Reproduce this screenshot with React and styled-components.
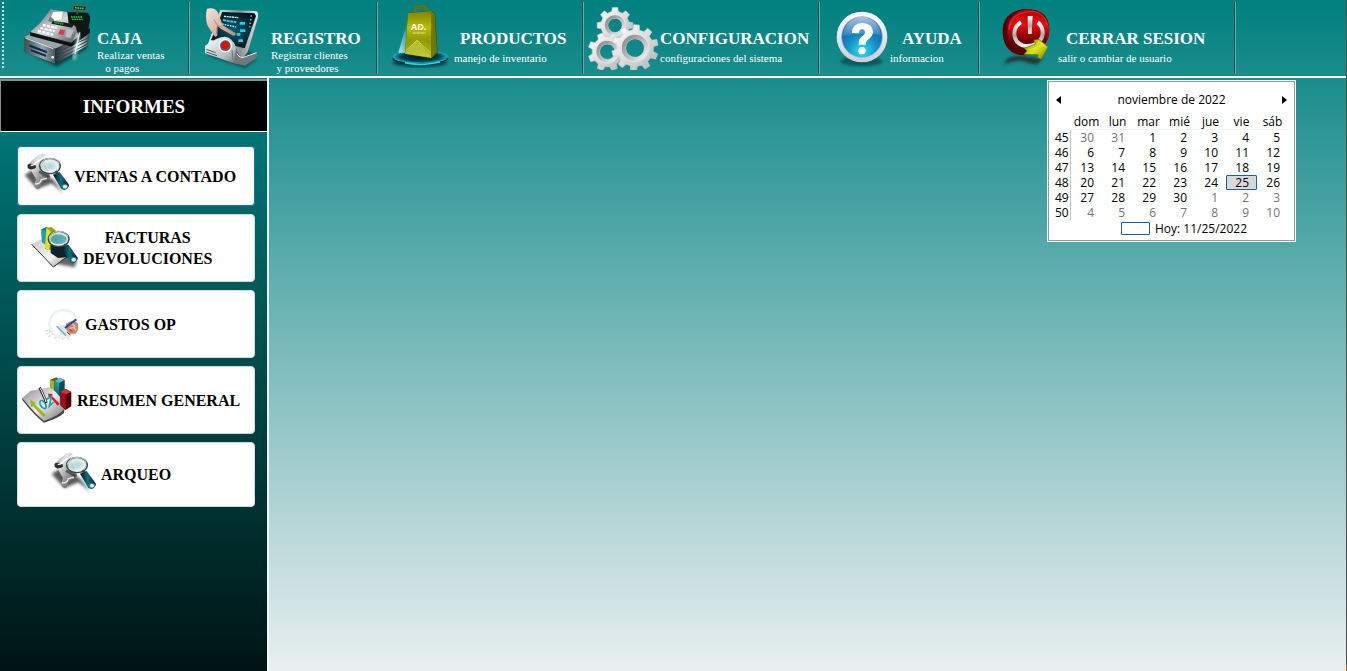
import React from "react";
import styled, { createGlobalStyle } from "styled-components";

const GlobalStyle = createGlobalStyle`
  *, *::before, *::after { box-sizing: border-box; }
  html, body { margin: 0; }
  body { font-family: "Liberation Serif", "Times New Roman", serif; }
  button { font: inherit; color: inherit; margin: 0; padding: 0; cursor: pointer; }
`;

const Page = styled.div`
  min-height: 100vh;
  display: flex;
  flex-direction: column;
  background: linear-gradient(#008080, #e9eff0);
  border-right: 1px solid;
  border-image: linear-gradient(#4b5052 calc(100% - 7px), #b05f28 0) 1;
`;

const Toolbar = styled.header`
  display: flex;
  height: 78px;
  padding: 2px 0;
  border-bottom: 2px solid #fff;
`;

const Grip = styled.div`
  flex: none;
  width: 5px;
  height: 68px;
  border-right: 1px solid transparent;
  background: repeating-linear-gradient(#c9e6e5 0 2px, transparent 2px 4px) 2px 0 / 2px 100% no-repeat;
`;

const ToolButton = styled.button`
  flex: none;
  display: flex;
  align-items: flex-start;
  gap: ${(p) => p.$gap}px;
  width: ${(p) => p.$width}px;
  height: 72px;
  padding-left: ${(p) => p.$start}px;
  border: 0;
  background:
    linear-gradient(#0b4f50, #0b4f50) right 1px top 0 / 1px 100% no-repeat,
    linear-gradient(#5fb0af, #5fb0af) right 0 top 0 / 1px 100% no-repeat;
  color: #fff;
  text-align: left;
  svg { flex: none; display: block; }
`;

const ToolText = styled.span`
  display: flex;
  flex-direction: column;
  padding-top: 27px;
  white-space: pre;
`;

const ToolTitle = styled.span`
  padding-left: ${(p) => p.$indent || 0}px;
  font-size: 17px;
  line-height: 20px;
  font-weight: bold;
`;

const ToolNote = styled.span`
  font-size: 11px;
  line-height: ${(p) => (p.$lines > 1 ? 13 : 18)}px;
`;

const Body = styled.div`
  flex: 1;
  display: flex;
`;

const Sidebar = styled.nav`
  flex: none;
  width: 269px;
  padding-top: 1px;
  border-right: 2px solid #eef6f6;
  background: linear-gradient(#007f7f, #001414);
`;

const SidebarTitle = styled.h1`
  margin: 0;
  height: 53px;
  border: solid;
  border-width: 2px 0 1px 1px;
  border-color: #8c8c8c #fff #fff #8c8c8c;
  background: #000;
  color: #fff;
  font-size: 19px;
  line-height: 52px;
  text-align: center;
`;

const ReportList = styled.div`
  display: flex;
  flex-direction: column;
  gap: 8px;
  padding: 14px 12px 14px 17px;
`;

const ReportButton = styled.button`
  display: flex;
  align-items: center;
  gap: 5px;
  height: ${(p) => p.$height}px;
  padding-left: ${(p) => p.$start}px;
  border: 1px solid ${(p) => (p.$focused ? "#1573c0" : "#d3dcdc")};
  border-radius: 4px;
  background: #fff;
  color: #000;
  font-size: 16px;
  line-height: 21px;
  font-weight: bold;
  white-space: pre;
  svg { flex: none; display: block; }
`;

const Workspace = styled.main`
  flex: 1;
  display: flex;
  justify-content: flex-end;
  align-items: flex-start;
  padding: 2px 50px 0 0;
`;

const Calendar = styled.section`
  width: 249px;
  padding: 4px 3px;
  border: 1px solid #fff;
  outline: 1px solid #8f9d9d;
  outline-offset: -2px;
  background: #fff;
  color: #000;
  font-family: "Open Sans", "Noto Sans", sans-serif;
  font-size: 12px;
`;

const CalendarHead = styled.div`
  display: flex;
  align-items: center;
  justify-content: space-between;
  height: 29px;
  padding: 0 5px;
`;

const ArrowButton = styled.button`
  display: flex;
  border: 0;
  background: none;
`;

const Month = styled.table`
  border-collapse: separate;
  border-spacing: 0;
  table-layout: fixed;
  width: 237px;
  th, td { padding: 0; font-weight: normal; }
  thead th { height: 16px; line-height: 15px; border-bottom: 1px solid #f2f2f2; }
  thead th:first-child { width: 20px; border-bottom: 0; }
`;

const Week = styled.th`
  height: 15px;
  line-height: 15px;
  text-align: left;
  padding-left: 4px !important;
  background: linear-gradient(#c8c8c8, #c8c8c8) right 0 top 0 / 1px 100% no-repeat;
`;

const Day = styled.td`
  height: 15px;
  line-height: ${(p) => (p.$today ? 13 : 15)}px;
  text-align: right;
  padding-right: ${(p) => (p.$today ? 7 : 8)}px !important;
  color: ${(p) => (p.$other ? "#757575" : "#000")};
  ${(p) => p.$today && "background:#d9d9d9;border:1px solid #1661ab;border-radius:1px;"}
`;

const TodayButton = styled.button`
  display: flex;
  align-items: center;
  gap: 5px;
  margin-left: 70px;
  height: 17px;
  border: 0;
  background: none;
`;

const TodayBox = styled.span`
  width: 29px;
  height: 13px;
  border: 1px solid #1661ab;
  border-radius: 1px;
`;

/* ---------- Icons ---------- */

function RegisterIcon() {
  return (
    <svg width="68" height="68" viewBox="66 6 204 204" aria-hidden="true">
      <defs>
        <linearGradient id="cf" x1="0" y1="0" x2="1" y2="0"><stop offset="0" stopColor="#3d4a50" /><stop offset=".6" stopColor="#98a6ad" /><stop offset="1" stopColor="#49565c" /></linearGradient>
        <linearGradient id="cs" x1="0" y1="0" x2="1" y2="0"><stop offset="0" stopColor="#20292e" /><stop offset=".5" stopColor="#72838a" /><stop offset=".7" stopColor="#e9f5f7" /><stop offset="1" stopColor="#34444b" /></linearGradient>
        <linearGradient id="ct" x1="0" y1="0" x2="1" y2="1"><stop offset="0" stopColor="#4b5358" /><stop offset=".5" stopColor="#d5dadc" /><stop offset="1" stopColor="#474f54" /></linearGradient>
        <filter id="cb" x="-30%" y="-60%" width="160%" height="220%"><feGaussianBlur stdDeviation="5" /></filter>
      </defs>
      <path d="M70 150L170 200L266 142L240 125Z" fill="#063c40" opacity=".9" filter="url(#cb)" />
      <path d="M72 110L104 98L266 98L166 146Z" fill="#98a4aa" />
      <path d="M72 111L166 146V191L74 156Z" fill="url(#cf)" />
      <path d="M166 146L268 102L264 136L166 191Z" fill="url(#cs)" />
      <path d="M168 158L266 113M168 169L265 122M168 180L265 131" stroke="#37474f" strokeWidth="3" />
      <path d="M76 114L160 146" stroke="#dfe6e9" strokeWidth="3" />
      <path d="M88 133L140 153V160L88 140Z" fill="#0b2c4a" />
      <path d="M92 147L138 164V171L92 154Z" fill="#0f2c49" />
      <circle cx="158" cy="172" r="4" fill="#f3f7f8" />
      <path d="M90 94L215 127L270 84V98L214 140L90 107Z" fill="#101416" />
      <path d="M152 28L204 37L214 72L238 84L214 128L90 96L120 70Z" fill="url(#ct)" />
      <path d="M202 36L262 38Q272 44 270 62L264 92L238 114L226 78L206 70Z" fill="#111617" />
      <path d="M209 44L250 44L254 64L211 60Z" fill="#06270c" />
      <path d="M213 51H248M216 58H248" stroke="#27c536" strokeWidth="4" strokeDasharray="5 2" />
      <path d="M218 14L262 17L258 35L216 31Z" fill="#586668" />
      <path d="M222 18L258 20L255 31L220 28Z" fill="#08270d" />
      <path d="M225 23L252 26" stroke="#38d945" strokeWidth="5" strokeDasharray="5 2" />
      <path d="M232 33V43" stroke="#39464a" strokeWidth="7" />
      <path d="M160 36L188 35L185 58L163 62L153 52Z" fill="#fafafa" />
      <path d="M151 49L144 64L156 67L163 61Z" fill="#767b80" />
      <path d="M158 63L190 67L222 73L216 83L154 71Z" fill="#162018" />
      <path d="M163 67L190 72" stroke="#35bd3e" strokeWidth="5" strokeDasharray="4 2" />
      <g stroke="#fff" strokeWidth="7" strokeDasharray="9 4"><path d="M128 75L170 84" /><path d="M121 84L164 94" /><path d="M114 93L160 104" /></g>
      <g stroke="#87939a" strokeWidth="1"><path d="M123 80L170 90M117 89L164 99M185 83L220 90" /></g>
      <path d="M181 88L196 91L190 106L174 102Z" fill="#e53a3a" />
      <path d="M200 86L222 90L211 114L196 111Z" fill="#b5bdc0" />
      <path d="M237 100L222 178" stroke="#e7fbff" strokeWidth="7" opacity=".9" filter="url(#cb)" />
      <path d="M239 97L225 160" stroke="#f5ffff" strokeWidth="4" opacity=".8" />
    </svg>
  );
}

function TouchIcon() {
  return (
    <svg width="54" height="68" viewBox="57 6 162 204" aria-hidden="true">
      <defs>
        <linearGradient id="rs" x1="0" y1="0" x2="1" y2="0"><stop offset="0" stopColor="#f5f5f5" /><stop offset=".65" stopColor="#8c9294" /><stop offset="1" stopColor="#e5e8e8" /></linearGradient>
        <radialGradient id="rp" cx=".5" cy=".5" r=".6"><stop offset="0" stopColor="#055c73" /><stop offset="1" stopColor="#020d12" /></radialGradient>
        <linearGradient id="rb" x1="0" y1="0" x2="1" y2="1"><stop offset="0" stopColor="#fff" /><stop offset=".6" stopColor="#b9bec0" /><stop offset="1" stopColor="#4e5355" /></linearGradient>
        <linearGradient id="rh" x1="0" y1="0" x2="1" y2="1"><stop offset="0" stopColor="#fae6da" /><stop offset="1" stopColor="#b98a76" /></linearGradient>
        <filter id="rf"><feGaussianBlur stdDeviation="4" /></filter>
      </defs>
      <path d="M64 166L180 204L216 176L190 150Z" fill="#033f42" opacity=".7" filter="url(#rf)" />
      <path d="M106 29L214 33Q223 40 219 52L188 156L168 181L66 140Z" fill="url(#rs)" />
      <path d="M112 36L208 40L213 48L179 145L78 120Z" fill="url(#rp)" />
      <g stroke="#22cfe4" strokeWidth="4" fill="none"><path d="M117 49L160 53" stroke="#e9ffff" strokeDasharray="6 2" /><path d="M114 60L154 67" strokeWidth="6" strokeDasharray="9 2" /><path d="M111 72L153 81" stroke="#b2f4fa" strokeDasharray="5 3" /><path d="M164 70H180M165 92H181M155 103H166M160 122H174" strokeWidth="8" /><path d="M199 46L194 82" stroke="#9bd7df" strokeDasharray="4 7" /></g>
      <path d="M60 137L92 118Q136 94 153 142L169 182L174 195L147 190L60 160Z" fill="url(#rb)" />
      <path d="M153 142Q164 178 180 171L216 160L215 174L179 197L147 188Z" fill="#73787a" />
      <path d="M156 161Q165 178 181 170L215 158" fill="none" stroke="#f7f7f7" strokeWidth="3" />
      <path d="M64 148L92 158M64 156L96 167" stroke="#51595b" strokeWidth="3" />
      <path d="M141 150L144 180M151 160L154 182" stroke="#73797b" strokeWidth="3" />
      <circle cx="121" cy="137" r="20" fill="#f8f8f8" /><circle cx="121" cy="137" r="16" fill="#565d60" />
      <path d="M109 129L122 123L132 129L130 144L120 150L110 143Z" fill="#e10b18" />
      <path d="M66 26Q91 20 100 40L113 76L151 99Q154 107 145 107L107 86L97 77L97 105Q93 115 86 106L68 77Q59 52 66 26Z" fill="url(#rh)" />
      <path d="M87 59L98 77L112 82M98 77L94 102" fill="none" stroke="#a26c56" strokeWidth="2" />
    </svg>
  );
}

function BagIcon() {
  return (
    <svg width="58" height="68" viewBox="33 6 174 204" aria-hidden="true">
      <defs>
        <linearGradient id="bg" x1="0" y1="0" x2="0" y2="1"><stop offset="0" stopColor="#7e8200" /><stop offset=".35" stopColor="#b9bc05" /><stop offset=".65" stopColor="#8f9600" /><stop offset="1" stopColor="#b9c31a" /></linearGradient>
        <radialGradient id="bd"><stop offset="0" stopColor="#00141c" /><stop offset=".7" stopColor="#00404f" /><stop offset="1" stopColor="#12b5cc" /></radialGradient>
        <linearGradient id="bl" x1="1" y1="0" x2="0" y2="1"><stop offset="0" stopColor="#fff" stopOpacity="0" /><stop offset="1" stopColor="#d9ffff" /></linearGradient>
        <filter id="bf"><feGaussianBlur stdDeviation="4" /></filter>
      </defs>
      <ellipse cx="120" cy="188" rx="83" ry="13" fill="#052f35" opacity=".8" filter="url(#bf)" />
      <path d="M38 168V180Q50 194 120 194T204 178V168Z" fill="#012a35" />
      <ellipse cx="121" cy="170" rx="83" ry="20" fill="url(#bd)" />
      <path d="M75 188Q95 193 120 193T180 186" stroke="#25dbe8" strokeWidth="5" fill="none" />
      <path d="M55 158L82 65L77 159Z" fill="url(#bl)" opacity=".8" />
      <path d="M105 38L107 23Q109 17 132 18Q138 19 139 37" fill="none" stroke="#6d7100" strokeWidth="8" />
      <path d="M84 38L155 32L165 40L173 157L153 176L75 162Z" fill="#3d4500" />
      <path d="M84 39L155 33L154 173L75 161Z" fill="url(#bg)" />
      <path d="M154 34L164 41L171 157L154 174Z" fill="#6f7900" />
      <path d="M75 161L112 118L154 173Z" fill="#c3ca46" opacity=".65" /><path d="M78 152L111 121L153 160" stroke="#dfe575" strokeWidth="2" fill="none" />
      <text x="93" y="89" fill="#fff" fontFamily="Open Sans, sans-serif" fontWeight="bold" fontSize="27">AD.</text>
      <path d="M98 99H136" stroke="#d7dc79" strokeWidth="4" strokeDasharray="3 1" />
      <path d="M92 124H139M98 131H142M89 138H130" stroke="#d3d66a" strokeWidth="1" strokeDasharray="4 2" />
    </svg>
  );
}

function gearPath(cx, cy, r, teeth, turn) {
  const pts = [];
  for (let i = 0; i < teeth; i++) {
    [[-0.3, 0.79], [-0.19, 1], [0.19, 1], [0.3, 0.79]].forEach(([o, k]) => {
      const a = ((i + o + turn) / teeth) * Math.PI * 2 - Math.PI / 2;
      pts.push(`${(cx + Math.cos(a) * r * k).toFixed(1)} ${(cy + Math.sin(a) * r * k).toFixed(1)}`);
    });
  }
  const h = r * 0.4;
  return `M${pts.join("L")}ZM${cx - h} ${cy}a${h} ${h} 0 1 0 ${2 * h} 0a${h} ${h} 0 1 0 ${-2 * h} 0Z`;
}

function GearsIcon() {
  const gears = [[105, 76, 54, 8, 0], [82, 155, 58, 8, 0.5], [165, 144, 70, 10, 0.1]];
  return (
    <svg width="71" height="68" viewBox="24 6 213 204" aria-hidden="true">
      <defs>
        <linearGradient id="gg" x1="0" y1="0" x2="1" y2="1"><stop offset="0" stopColor="#fff" /><stop offset=".5" stopColor="#dcdcdc" /><stop offset="1" stopColor="#b2b2b2" /></linearGradient>
        <linearGradient id="gi" x1="0" y1="0" x2="1" y2="1"><stop offset="0" stopColor="#8a8a8a" /><stop offset=".5" stopColor="#b8b8b8" /><stop offset="1" stopColor="#f4f4f4" /></linearGradient>
      </defs>
      {gears.map(([x, y, r, n, turn]) => (
        <g key={x}>
          <path d={gearPath(x, y, r, n, turn)} fill="url(#gg)" fillRule="evenodd" stroke="#c6cccc" strokeWidth="2" strokeLinejoin="round" />
          <circle cx={x} cy={y} r={r * 0.49} fill="none" stroke="url(#gi)" strokeWidth={r * 0.18} />
          <circle cx={x} cy={y} r={r * 0.6} fill="none" stroke="#ececec" strokeWidth="2" />
        </g>
      ))}
    </svg>
  );
}

function HelpIcon() {
  return (
    <svg width="54" height="68" viewBox="60 6 162 204" aria-hidden="true">
      <defs>
        <radialGradient id="hb" cx=".5" cy=".85" r=".85"><stop offset="0" stopColor="#28e3f5" /><stop offset=".45" stopColor="#138dc5" /><stop offset="1" stopColor="#1551a0" /></radialGradient>
        <linearGradient id="hr" x1="0" y1="0" x2="0" y2="1"><stop offset="0" stopColor="#fff" /><stop offset="1" stopColor="#c9d0d6" /></linearGradient>
        <linearGradient id="hg" x1="0" y1="0" x2="0" y2="1"><stop offset="0" stopColor="#fff" stopOpacity=".65" /><stop offset="1" stopColor="#fff" stopOpacity=".1" /></linearGradient>
        <filter id="hf" x="-20%" y="-50%" width="140%" height="200%"><feGaussianBlur stdDeviation="5" /></filter>
      </defs>
      <ellipse cx="140" cy="184" rx="63" ry="15" fill="#034f56" opacity=".8" filter="url(#hf)" />
      <circle cx="141" cy="111" r="76" fill="url(#hr)" />
      <circle cx="141" cy="111" r="61" fill="url(#hb)" stroke="#8ea9be" strokeWidth="2" />
      <path d="M84 108A57 57 0 0 1 198 108Q160 91 84 108Z" fill="url(#hg)" />
      <path d="M111 99Q110 71 142 69Q174 71 174 96Q173 110 159 119Q152 124 152 134H131Q129 118 140 110Q151 103 150 97Q149 87 141 87Q132 88 132 100Z" fill="#fff" />
      <circle cx="141" cy="152" r="11" fill="#fff" />
    </svg>
  );
}

function LogoutIcon() {
  return (
    <svg width="50" height="68" viewBox="78 6 150 204" aria-hidden="true">
      <defs>
        <linearGradient id="lr" x1="0" y1="0" x2="0" y2="1"><stop offset="0" stopColor="#b40000" /><stop offset=".35" stopColor="#e80b12" /><stop offset=".7" stopColor="#7c0000" /><stop offset="1" stopColor="#4a0000" /></linearGradient>
        <linearGradient id="lw" x1="0" y1="0" x2="0" y2="1"><stop offset="0" stopColor="#fff" /><stop offset=".55" stopColor="#a8a8a8" /><stop offset="1" stopColor="#f3f3f3" /></linearGradient>
        <linearGradient id="ly" x1="0" y1="0" x2="1" y2="1"><stop offset="0" stopColor="#7e8a00" /><stop offset=".5" stopColor="#dbe518" /><stop offset="1" stopColor="#737e00" /></linearGradient>
        <filter id="lf" x="-30%" y="-60%" width="160%" height="220%"><feGaussianBlur stdDeviation="5" /></filter>
      </defs>
      <path d="M85 192Q100 163 143 168L205 176L183 194L133 181Z" fill="#222" opacity=".8" filter="url(#lf)" />
      <path d="M83 88C84 49 116 26 160 27L181 30C212 39 226 63 222 97C218 137 184 164 145 166C102 165 81 133 83 88Z" fill="#540006" />
      <ellipse cx="160" cy="93" rx="63" ry="65" fill="url(#lr)" />
      <path d="M101 90Q106 43 156 35T218 76" fill="none" stroke="#ef3c3c" strokeWidth="3" opacity=".7" />
      <path d="M138 67C112 82 109 123 143 136C175 145 202 123 203 100C204 85 198 75 188 67" fill="none" stroke="url(#lw)" strokeWidth="12" />
      <path d="M158 48H173L170 102H159Z" fill="url(#lw)" />
      <path d="M148 144L182 132L176 120L192 118L219 141L199 178L188 173L189 164L147 163L156 153Z" fill="url(#ly)" stroke="#667000" strokeWidth="2" />
      <path d="M159 151L187 142L191 124L213 141" fill="none" stroke="#f2f64c" strokeWidth="2" />
    </svg>
  );
}

function Magnifier({ id }) {
  return (
    <>
      <defs>
        <radialGradient id={id + "l"} cx=".5" cy=".5" r=".6"><stop offset="0" stopColor="#8fc4cc" /><stop offset=".6" stopColor="#dceced" /><stop offset="1" stopColor="#6f878c" /></radialGradient>
        <linearGradient id={id + "h"} x1="0" y1="0" x2="1" y2="0"><stop offset="0" stopColor="#01141a" /><stop offset=".5" stopColor="#0f6f80" /><stop offset="1" stopColor="#021a20" /></linearGradient>
      </defs>
      <ellipse cx="150" cy="273" rx="31" ry="23" fill={`url(#${id}l)`} fillOpacity=".75" stroke="#3d4547" strokeWidth="4" />
      <path d="M121 271Q126 250 150 250T178 266" stroke="#fff" strokeWidth="2" fill="none" />
      <path d="M126 283Q145 298 172 286" stroke="#e9f5f5" strokeWidth="3" fill="none" />
      <path d="M166 289L174 298" stroke="#444" strokeWidth="9" />
      <path d="M159 299L179 291L207 329Q206 341 193 345L184 342Z" fill={`url(#${id}h)`} />
      <ellipse cx="195" cy="335" rx="8" ry="7" fill="#c8f0f2" stroke="#15535d" strokeWidth="2" />
    </>
  );
}

function PaperSearchIcon({ id }) {
  return (
    <svg width="46" height="48" viewBox="69 231 138 144" aria-hidden="true">
      <defs>
        <linearGradient id={id + "p"} x1="0" y1="0" x2="1" y2="1"><stop offset="0" stopColor="#555" /><stop offset=".3" stopColor="#e6e6e6" /><stop offset=".6" stopColor="#999" /><stop offset="1" stopColor="#333" /></linearGradient>
        <filter id={id + "f"} x="-40%" y="-40%" width="180%" height="180%"><feGaussianBlur stdDeviation="5" /></filter>
      </defs>
      <path d="M74 300L112 342L155 325L190 354L161 315L105 280Z" fill="#222" opacity=".75" filter={`url(#${id}f)`} />
      <path d="M82 270Q98 255 119 238Q133 232 138 244L130 252L151 306L140 315Q128 311 119 340Q106 346 102 331L108 313L92 284Q83 282 82 270Z" fill={`url(#${id}p)`} />
      <path d="M83 269Q94 263 106 270Q113 279 99 282Q89 286 83 278Z" fill="#2f2f2f" />
      <path d="M92 271Q105 272 109 262L137 243" stroke="#fff" strokeWidth="4" fill="none" />
      <path d="M117 290L146 306" stroke="#3c3c3c" strokeWidth="8" opacity=".7" />
      <path d="M105 326Q119 330 124 314L141 310" stroke="#eee" strokeWidth="4" fill="none" />
      <Magnifier id={id} />
    </svg>
  );
}

function InvoiceSearchIcon() {
  return (
    <svg width="47" height="44" viewBox="93 64 141 132" aria-hidden="true">
      <defs>
        <linearGradient id="ip" x1="0" y1="0" x2="1" y2="1"><stop offset="0" stopColor="#c8c8c8" /><stop offset=".6" stopColor="#f4f4f4" /><stop offset="1" stopColor="#888" /></linearGradient>
        <filter id="if" x="-40%" y="-40%" width="180%" height="180%"><feGaussianBlur stdDeviation="4" /></filter>
      </defs>
      <path d="M154 175L224 188L231 165L186 135Z" fill="#222" opacity=".7" filter="url(#if)" />
      <path d="M95 119L124 104L203 153L160 187Z" fill="url(#ip)" /><path d="M95 119L160 187L204 154" stroke="#333" strokeWidth="3" fill="none" />
      <path d="M124 74L140 67L150 72L149 126L126 113Z" fill="#087b8b" /><path d="M124 74L137 78V119L126 113Z" fill="#14a5b5" />
      <path d="M139 70L154 67L168 78L173 139L135 133Z" fill="#9da200" /><path d="M139 70L152 79L148 136L135 131Z" fill="#dfe22a" />
      <path d="M152 120L205 120L218 138L212 156L174 160L152 145Z" fill="#0c2429" />
      <g transform="translate(26 -170)"><Magnifier id="im" /></g>
      <ellipse cx="176" cy="104" rx="24" ry="15" fill="#168a96" opacity=".6" />
    </svg>
  );
}

function ExpenseIcon() {
  return (
    <svg width="36" height="34" viewBox="132 300 108 102" aria-hidden="true">
      <defs><radialGradient id="ex"><stop offset="0" stopColor="#fff" /><stop offset=".75" stopColor="#fff" /><stop offset="1" stopColor="#e6ecee" /></radialGradient></defs>
      <path d="M136 382L163 368L179 394M145 390L170 374L189 399M136 372L153 370M163 394L183 383L210 398" stroke="#b9d5dc" strokeWidth="3" fill="none" strokeDasharray="8 3" />
      <circle cx="190" cy="350" r="44" fill="url(#ex)" stroke="#e9edee" strokeWidth="2" />
      <path d="M171 358L204 352L225 373L207 390L184 384Z" fill="#dce7eb" />
      <path d="M170 358L199 386" stroke="#75aabc" strokeWidth="4" />
      <path d="M198 350Q218 335 233 348Q239 367 227 380L209 380L199 368Z" fill="#c98768" />
      <path d="M205 355L218 350L226 360M209 364L221 361L228 370" stroke="#f4c2a5" strokeWidth="4" fill="none" />
      <path d="M195 363L229 337" stroke="#2346ae" strokeWidth="6" />
      <path d="M201 375L211 384M210 367L216 374" stroke="#7b281d" strokeWidth="3" />
    </svg>
  );
}

function SummaryIcon() {
  return (
    <svg width="50" height="46" viewBox="66 52 150 138" aria-hidden="true">
      <defs>
        <linearGradient id="sp" x1="0" y1="0" x2="1" y2="1"><stop offset="0" stopColor="#888" /><stop offset=".5" stopColor="#ececec" /><stop offset="1" stopColor="#666" /></linearGradient>
        <linearGradient id="sc" x1="0" y1="0" x2="0" y2="1"><stop offset="0" stopColor="#1fa3b8" /><stop offset="1" stopColor="#04596c" /></linearGradient>
      </defs>
      <path d="M151 60L169 53L181 60V105L158 104L151 95Z" fill="#5e6d00" /><path d="M151 60L162 65V102L152 95Z" fill="#a3b520" />
      <path d="M164 64L181 55L194 61V112L174 118L165 103Z" fill="#064a5a" /><path d="M164 64L177 70V116L165 104Z" fill="url(#sc)" /><path d="M164 64L181 55L194 61L177 70Z" fill="#4fc4d2" />
      <path d="M67 115L91 94L148 83Q186 104 194 148Q185 170 132 188Q110 172 67 115Z" fill="url(#sp)" />
      <path d="M67 115Q107 165 132 184Q180 167 193 148L192 160Q175 176 132 189Q105 170 67 121Z" fill="#444" />
      <path d="M180 96L198 88L214 97V140L196 151L181 137Z" fill="#4d0306" /><path d="M180 96L197 103V149L182 136Z" fill="#9d1218" /><path d="M180 96L198 88L214 97L197 104Z" fill="#cf3538" />
      <path d="M90 120L109 130L104 133L138 166L130 172L99 139L94 143Z" fill="#a1b716" />
      <path d="M144 102L158 103L155 108L179 132L173 138L151 113L147 116Z" fill="#d71925" />
      <path d="M119 130Q121 118 131 125Q144 142 135 147Q123 145 119 130M139 119L154 111L148 139L161 127" stroke="#18a2ad" strokeWidth="5" fill="none" />
      <path d="M119 84L134 116L139 130" stroke="#262d30" strokeWidth="8" fill="none" /><path d="M121 86L135 117L138 127" stroke="#f5f5f5" strokeWidth="3" fill="none" />
    </svg>
  );
}

/* ---------- Content ---------- */

const tools = [
  { title: "CAJA", note: "Realizar ventas\n   o pagos", lines: 2, width: 185, start: 17, gap: 7, Icon: RegisterIcon },
  { title: "REGISTRO", note: "Registrar clientes\n  y proveedores", lines: 2, width: 188, start: 14, gap: 13, Icon: TouchIcon },
  { title: "PRODUCTOS", note: "manejo de inventario", width: 206, start: 13, gap: 5, indent: 6, Icon: BagIcon },
  { title: "CONFIGURACION", note: "configuraciones del sistema", width: 236, start: 4, gap: 1, Icon: GearsIcon },
  { title: "AYUDA", note: "informacion", width: 160, start: 15, gap: 1, indent: 12, Icon: HelpIcon },
  { title: "CERRAR SESION", note: "salir o cambiar de usuario", width: 256, start: 21, gap: 7, indent: 8, Icon: LogoutIcon },
];

const reports = [
  { label: "VENTAS A CONTADO", height: 60, start: 5, focused: true, icon: <PaperSearchIcon id="va" /> },
  { label: "FACTURAS\nDEVOLUCIONES", height: 68, start: 13, icon: <InvoiceSearchIcon /> },
  { label: "GASTOS OP", height: 68, start: 26, icon: <ExpenseIcon /> },
  { label: "RESUMEN GENERAL", height: 68, start: 4, icon: <SummaryIcon /> },
  { label: "ARQUEO", height: 65, start: 32, icon: <PaperSearchIcon id="aq" /> },
];

const dayNames = ["dom", "lun", "mar", "mié", "jue", "vie", "sáb"];
const firstDay = new Date(2022, 9, 30);
const weeks = Array.from({ length: 6 }, (_, w) => ({
  number: 45 + w,
  days: Array.from({ length: 7 }, (_, d) => {
    const date = new Date(firstDay);
    date.setDate(firstDay.getDate() + w * 7 + d);
    return date;
  }),
}));

function MonthCalendar() {
  return (
    <Calendar aria-label="Calendario">
      <CalendarHead>
        <ArrowButton aria-label="Mes anterior"><svg width="5" height="8"><path d="M5 0V8L0 4Z" /></svg></ArrowButton>
        <span>noviembre de 2022</span>
        <ArrowButton aria-label="Mes siguiente"><svg width="5" height="8"><path d="M0 0V8L5 4Z" /></svg></ArrowButton>
      </CalendarHead>
      <Month>
        <thead>
          <tr><th />{dayNames.map((n) => <th key={n} scope="col">{n}</th>)}</tr>
        </thead>
        <tbody>
          {weeks.map((w) => (
            <tr key={w.number}>
              <Week scope="row">{w.number}</Week>
              {w.days.map((d) => (
                <Day key={d.getTime()} $other={d.getMonth() !== 10} $today={d.getMonth() === 10 && d.getDate() === 25}>
                  {d.getDate()}
                </Day>
              ))}
            </tr>
          ))}
        </tbody>
      </Month>
      <TodayButton><TodayBox />Hoy: 11/25/2022</TodayButton>
    </Calendar>
  );
}

export default function App() {
  return (
    <Page>
      <GlobalStyle />
      <Toolbar>
        <Grip />
        {tools.map(({ title, note, lines, width, start, gap, indent, Icon }) => (
          <ToolButton key={title} $width={width} $start={start} $gap={gap}>
            <Icon />
            <ToolText>
              <ToolTitle $indent={indent}>{title}</ToolTitle>
              <ToolNote $lines={lines}>{note}</ToolNote>
            </ToolText>
          </ToolButton>
        ))}
      </Toolbar>
      <Body>
        <Sidebar>
          <SidebarTitle>INFORMES</SidebarTitle>
          <ReportList>
            {reports.map((r) => (
              <ReportButton key={r.label} $height={r.height} $start={r.start} $focused={r.focused}>
                {r.icon}
                <span>{r.label}</span>
              </ReportButton>
            ))}
          </ReportList>
        </Sidebar>
        <Workspace>
          <MonthCalendar />
        </Workspace>
      </Body>
    </Page>
  );
}
